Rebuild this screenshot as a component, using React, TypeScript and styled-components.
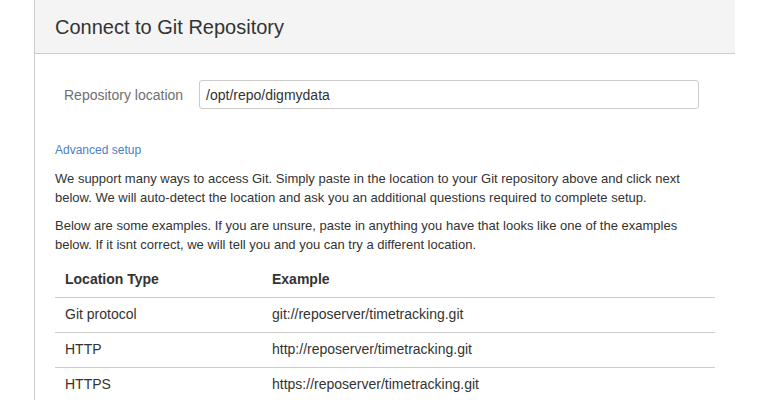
import React from "react";
import styled, { createGlobalStyle } from "styled-components";

const Global = createGlobalStyle`
  html, body { margin: 0; padding: 0; background: #fff; }
  body { font-family: "Liberation Sans", Arial, sans-serif; color: #333; }
`;

const Page = styled.div`
  width: 770px;
  height: 400px;
  overflow: hidden;
  padding-left: 34px;
  box-sizing: border-box;
`;

const Panel = styled.section`
  width: 701px;
  min-height: 400px;
  border-left: 1px solid #cccccc;
  box-sizing: border-box;
`;

const Header = styled.header`
  height: 54px;
  background: #f4f4f4;
  border-bottom: 1px solid #cccccc;
  box-sizing: border-box;
  display: flex;
  align-items: center;
  padding-left: 20px;
`;

const Title = styled.h1`
  margin: 0;
  font-size: 20px;
  font-weight: normal;
  color: #333;
  padding-top: 2px;
`;

const Body = styled.div`
  padding: 26px 20px 0 20px;
`;

const FormRow = styled.div`
  display: flex;
  align-items: center;
  gap: 16px;
  padding-left: 9px;
`;

const Label = styled.label`
  font-size: 14px;
  color: #707070;
`;

const Input = styled.input`
  width: 500px;
  height: 29px;
  box-sizing: border-box;
  border: 1px solid #cccccc;
  border-radius: 3px;
  padding: 0 6px;
  font-family: "Liberation Sans", Arial, sans-serif;
  font-size: 14px;
  color: #333;
  outline: none;
`;

const Link = styled.a`
  display: block;
  margin-top: 34px;
  font-size: 12px;
  color: #4a7fc4;
  text-decoration: none;
`;

const Para = styled.p<{ $top?: number }>`
  margin: ${(p) => p.$top ?? 9}px 0 0 0;
  font-size: 13px;
  line-height: 19px;
  color: #333;
`;

const Table = styled.table`
  margin-top: 8px;
  width: 660px;
  border-collapse: collapse;
  font-size: 14px;
`;

const Th = styled.th<{ $w?: string }>`
  text-align: left;
  font-weight: bold;
  padding: 8px 10px;
  height: 35px;
  box-sizing: border-box;
  border-bottom: 1px solid #cccccc;
  width: ${(p) => p.$w || "auto"};
`;

const Td = styled.td`
  padding: 7px 10px 9px 10px;
  height: 35px;
  box-sizing: border-box;
  border-bottom: 1px solid #cccccc;
`;

const rows = [
  ["Git protocol", "git://reposerver/timetracking.git"],
  ["HTTP", "http://reposerver/timetracking.git"],
  ["HTTPS", "https://reposerver/timetracking.git"],
];

export default function App() {
  return (
    <>
      <Global />
      <Page>
        <Panel>
          <Header>
            <Title>Connect to Git Repository</Title>
          </Header>
          <Body>
            <FormRow>
              <Label>Repository location</Label>
              <Input defaultValue="/opt/repo/digmydata" />
            </FormRow>
            <Link href="#">Advanced setup</Link>
            <Para $top={12}>
              We support many ways to access Git. Simply paste in the location to your Git repository above and click next
              below. We will auto-detect the location and ask you an additional questions required to complete setup.
            </Para>
            <Para>
              Below are some examples. If you are unsure, paste in anything you have that looks like one of the examples
              below. If it isnt correct, we will tell you and you can try a different location.
            </Para>
            <Table>
              <thead>
                <tr>
                  <Th $w="207px">Location Type</Th>
                  <Th>Example</Th>
                </tr>
              </thead>
              <tbody>
                {rows.map(([a, b]) => (
                  <tr key={a}>
                    <Td>{a}</Td>
                    <Td>{b}</Td>
                  </tr>
                ))}
              </tbody>
            </Table>
          </Body>
        </Panel>
      </Page>
    </>
  );
}
